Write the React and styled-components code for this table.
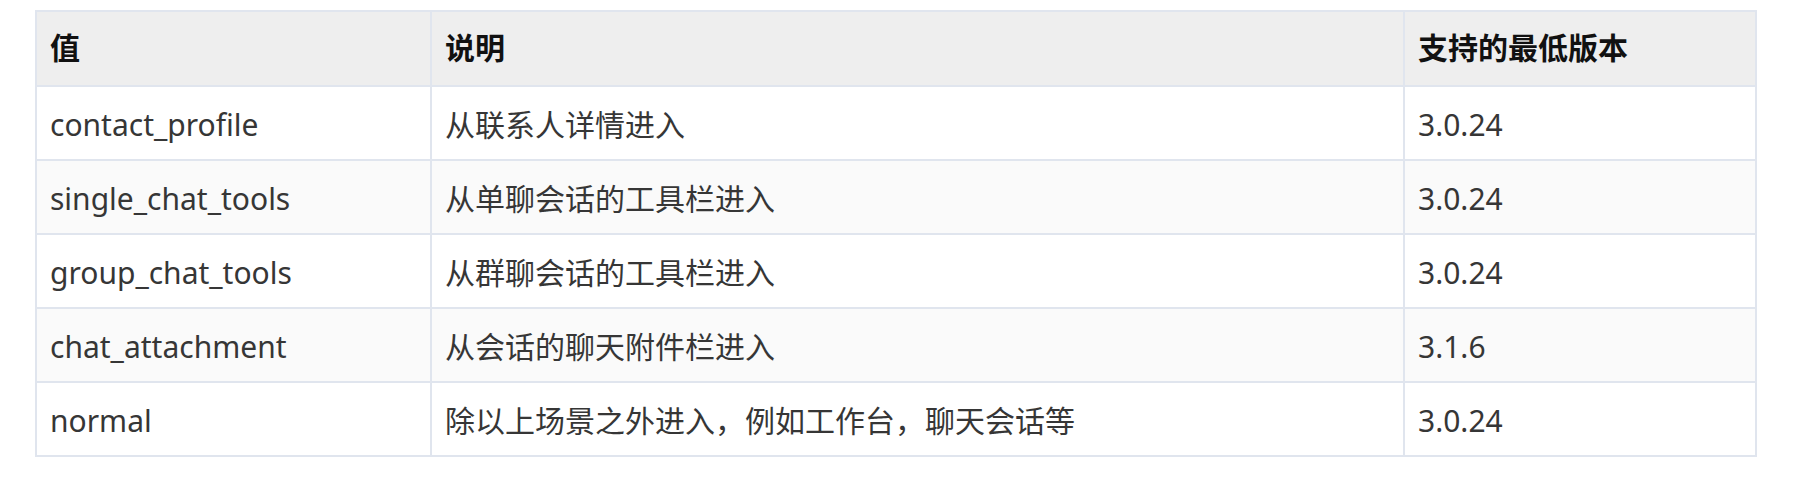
import React from "react";
import styled, { createGlobalStyle } from "styled-components";

const GlobalStyle = createGlobalStyle`
    body {
        margin: 0;
        background: #ffffff;
        font-family: "Noto Sans", "Noto Sans CJK SC", sans-serif;
    }
`;

const rows = [
    { value: "contact_profile", desc: "从联系人详情进入", version: "3.0.24" },
    { value: "single_chat_tools", desc: "从单聊会话的工具栏进入", version: "3.0.24" },
    { value: "group_chat_tools", desc: "从群聊会话的工具栏进入", version: "3.0.24" },
    { value: "chat_attachment", desc: "从会话的聊天附件栏进入", version: "3.1.6" },
    { value: "normal", desc: "除以上场景之外进入，例如工作台，聊天会话等", version: "3.0.24" },
];

function App() {
    return (
        <Page>
            <GlobalStyle />
            <Table>
                <colgroup>
                    <col style={{ width: 395 }} />
                    <col style={{ width: 973 }} />
                    <col style={{ width: 352 }} />
                </colgroup>
                <thead>
                    <tr>
                        <HeadCell>值</HeadCell>
                        <HeadCell>说明</HeadCell>
                        <HeadCell>支持的最低版本</HeadCell>
                    </tr>
                </thead>
                <tbody>
                    {rows.map((row, i) => (
                        <Row key={row.value} $striped={i % 2 === 1}>
                            <Cell>{row.value}</Cell>
                            <Cell>{row.desc}</Cell>
                            <Cell>{row.version}</Cell>
                        </Row>
                    ))}
                </tbody>
            </Table>
        </Page>
    );
}

export default App;

const Page = styled.div`
    padding: 10px 0 0 35px;
`;

const Table = styled.table`
    border-collapse: collapse;
    table-layout: fixed;
    width: 1720px;
    font-size: 30px;
    color: #363636;
`;

const HeadCell = styled.th`
    text-align: left;
    font-weight: 700;
    color: #111111;
    background: #eeeeee;
    border: 2px solid #e0e5ee;
    padding: 12px 13px 12.5px;
    line-height: 48px;
`;

const Row = styled.tr`
    background: ${(p) => (p.$striped ? "#fafafa" : "#ffffff")};
`;

const Cell = styled.td`
    border: 2px solid #e0e5ee;
    padding: 14px 13px 10.1px;
    line-height: 48px;
    white-space: nowrap;
`;
